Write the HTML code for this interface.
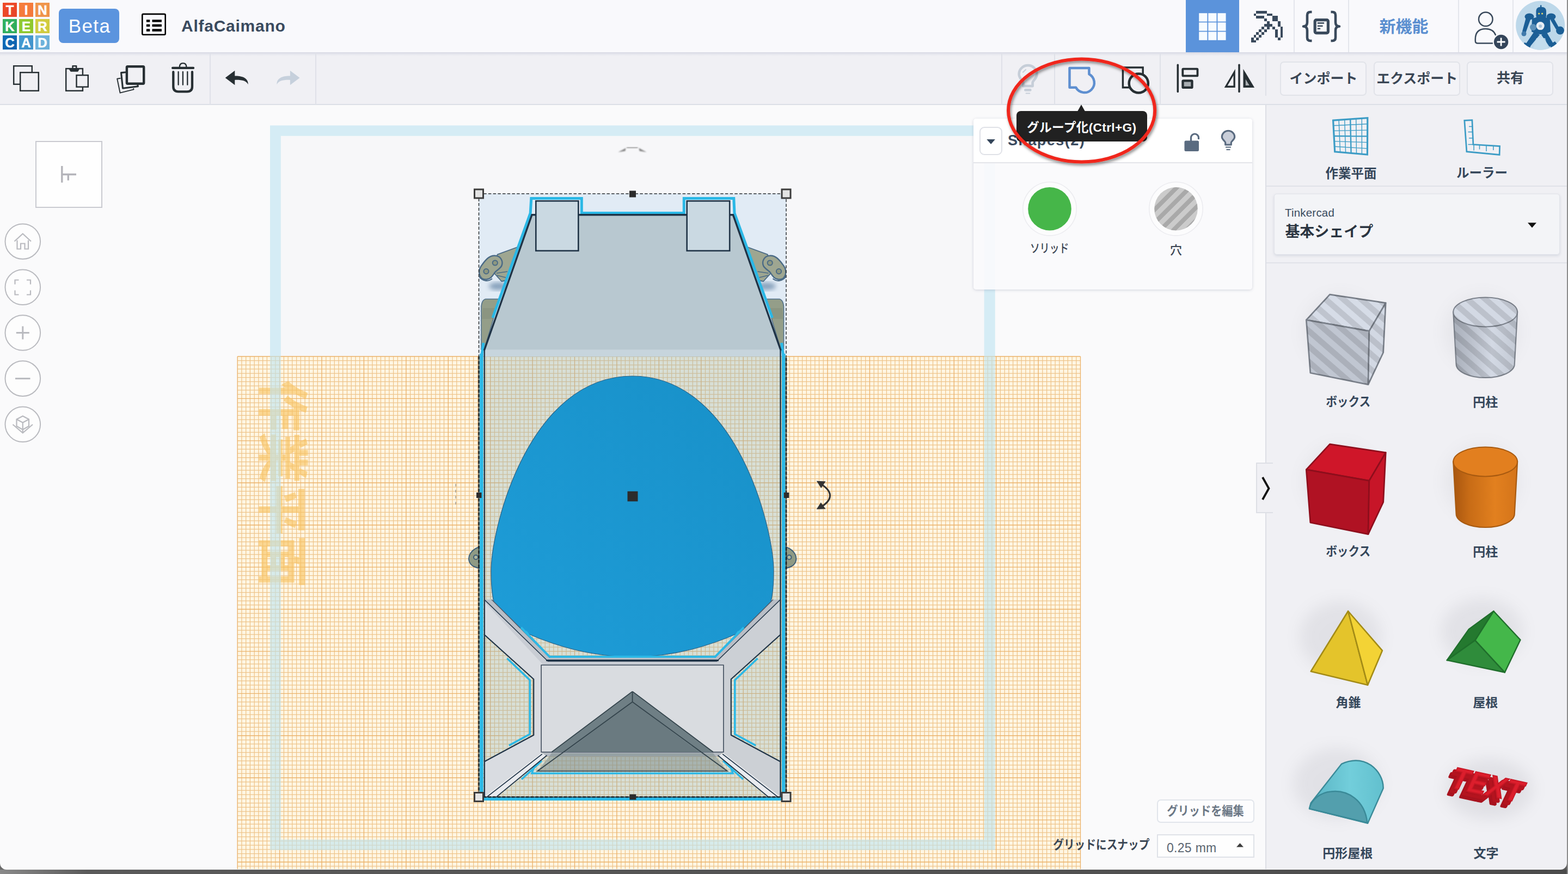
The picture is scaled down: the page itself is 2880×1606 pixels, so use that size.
<!DOCTYPE html><html><head><meta charset="utf-8"><title>Tinkercad</title><style>
*{box-sizing:border-box;margin:0;padding:0}
html,body{width:2880px;height:1606px;overflow:hidden;background:#fafafb;font-family:"Liberation Sans",sans-serif;color:#3a4a5c}
.abs{position:absolute}
#hdr{position:absolute;left:0;top:0;width:2880px;height:96px;background:#f9f9fc}
#hdrsh{position:absolute;left:0;top:96px;width:2880px;height:7px;background:linear-gradient(#d6d8e3,#e6e7ee 50%,#f0f0f4)}
#tb{position:absolute;left:0;top:96px;width:2880px;height:97px;background:#f0f0f4;border-bottom:2px solid #dcdfe6}
#rp{position:absolute;left:2324px;top:193px;width:556px;height:1404px;background:#f0f0f4;border-left:2px solid #dddfe5}
#bot{position:absolute;left:0;top:1597.500px;width:2880px;height:9px;background:linear-gradient(90deg,#8a8a8a 0,#5a5a5a 160px,#4c4c4c 100%)}
#rstrip{position:absolute;left:2878px;top:0;width:2px;height:1606px;background:#8c8c8c}
.vsep{position:absolute;width:2px;background:#dfe2e8}
.btn{position:absolute;border:2px solid #e1e3e9;border-radius:7px;background:#f3f3f7}
.lbl{overflow:visible}
.lbl text{font-family:"Liberation Sans","Noto Sans CJK JP",sans-serif;font-size:1000px;font-weight:bold}
</style></head><body>
<svg class="abs" style="left:0;top:193px" width="2326" height="1404" viewBox="0 193 2326 1404">
<defs><linearGradient id="egg" x1="0" y1="1" x2="1" y2="0"><stop offset="0" stop-color="#1e9dd8"/><stop offset="1" stop-color="#1890c8"/></linearGradient><filter id="bl2" x="-20%" y="-20%" width="140%" height="140%"><feGaussianBlur stdDeviation="4"/></filter><filter id="bl1"><feGaussianBlur stdDeviation="0.8"/></filter><clipPath id="body"><rect x="889.6" y="655" width="543.9" height="809.5"/></clipPath></defs>
<rect x="515.8" y="249.8" width="1292" height="1293" fill="#f7f7f9"/>
<rect x="436.2" y="655.0" width="1548.3" height="942.0" fill="#fff6e3"/>
<path d="M443.9 655.0V1597.0M451.7 655.0V1597.0M459.4 655.0V1597.0M467.2 655.0V1597.0M474.9 655.0V1597.0M482.6 655.0V1597.0M490.4 655.0V1597.0M498.1 655.0V1597.0M505.9 655.0V1597.0M521.4 655.0V1597.0M529.1 655.0V1597.0M536.8 655.0V1597.0M544.6 655.0V1597.0M552.3 655.0V1597.0M560.1 655.0V1597.0M567.8 655.0V1597.0M575.5 655.0V1597.0M583.3 655.0V1597.0M598.8 655.0V1597.0M606.5 655.0V1597.0M614.3 655.0V1597.0M622.0 655.0V1597.0M629.7 655.0V1597.0M637.5 655.0V1597.0M645.2 655.0V1597.0M653.0 655.0V1597.0M660.7 655.0V1597.0M676.2 655.0V1597.0M683.9 655.0V1597.0M691.7 655.0V1597.0M699.4 655.0V1597.0M707.2 655.0V1597.0M714.9 655.0V1597.0M722.6 655.0V1597.0M730.4 655.0V1597.0M738.1 655.0V1597.0M753.6 655.0V1597.0M761.3 655.0V1597.0M769.1 655.0V1597.0M776.8 655.0V1597.0M784.6 655.0V1597.0M792.3 655.0V1597.0M800.1 655.0V1597.0M807.8 655.0V1597.0M815.5 655.0V1597.0M831.0 655.0V1597.0M838.8 655.0V1597.0M846.5 655.0V1597.0M854.2 655.0V1597.0M862.0 655.0V1597.0M869.7 655.0V1597.0M877.5 655.0V1597.0M885.2 655.0V1597.0M892.9 655.0V1597.0M908.4 655.0V1597.0M916.2 655.0V1597.0M923.9 655.0V1597.0M931.7 655.0V1597.0M939.4 655.0V1597.0M947.1 655.0V1597.0M954.9 655.0V1597.0M962.6 655.0V1597.0M970.4 655.0V1597.0M985.8 655.0V1597.0M993.6 655.0V1597.0M1001.3 655.0V1597.0M1009.1 655.0V1597.0M1016.8 655.0V1597.0M1024.6 655.0V1597.0M1032.3 655.0V1597.0M1040.0 655.0V1597.0M1047.8 655.0V1597.0M1063.3 655.0V1597.0M1071.0 655.0V1597.0M1078.7 655.0V1597.0M1086.5 655.0V1597.0M1094.2 655.0V1597.0M1102.0 655.0V1597.0M1109.7 655.0V1597.0M1117.5 655.0V1597.0M1125.2 655.0V1597.0M1140.7 655.0V1597.0M1148.4 655.0V1597.0M1156.2 655.0V1597.0M1163.9 655.0V1597.0M1171.6 655.0V1597.0M1179.4 655.0V1597.0M1187.1 655.0V1597.0M1194.9 655.0V1597.0M1202.6 655.0V1597.0M1218.1 655.0V1597.0M1225.8 655.0V1597.0M1233.6 655.0V1597.0M1241.3 655.0V1597.0M1249.1 655.0V1597.0M1256.8 655.0V1597.0M1264.5 655.0V1597.0M1272.3 655.0V1597.0M1280.0 655.0V1597.0M1295.5 655.0V1597.0M1303.2 655.0V1597.0M1311.0 655.0V1597.0M1318.7 655.0V1597.0M1326.5 655.0V1597.0M1334.2 655.0V1597.0M1342.0 655.0V1597.0M1349.7 655.0V1597.0M1357.4 655.0V1597.0M1372.9 655.0V1597.0M1380.7 655.0V1597.0M1388.4 655.0V1597.0M1396.1 655.0V1597.0M1403.9 655.0V1597.0M1411.6 655.0V1597.0M1419.4 655.0V1597.0M1427.1 655.0V1597.0M1434.9 655.0V1597.0M1450.3 655.0V1597.0M1458.1 655.0V1597.0M1465.8 655.0V1597.0M1473.6 655.0V1597.0M1481.3 655.0V1597.0M1489.0 655.0V1597.0M1496.8 655.0V1597.0M1504.5 655.0V1597.0M1512.3 655.0V1597.0M1527.8 655.0V1597.0M1535.5 655.0V1597.0M1543.2 655.0V1597.0M1551.0 655.0V1597.0M1558.7 655.0V1597.0M1566.5 655.0V1597.0M1574.2 655.0V1597.0M1581.9 655.0V1597.0M1589.7 655.0V1597.0M1605.2 655.0V1597.0M1612.9 655.0V1597.0M1620.6 655.0V1597.0M1628.4 655.0V1597.0M1636.1 655.0V1597.0M1643.9 655.0V1597.0M1651.6 655.0V1597.0M1659.4 655.0V1597.0M1667.1 655.0V1597.0M1682.6 655.0V1597.0M1690.3 655.0V1597.0M1698.1 655.0V1597.0M1705.8 655.0V1597.0M1713.5 655.0V1597.0M1721.3 655.0V1597.0M1729.0 655.0V1597.0M1736.8 655.0V1597.0M1744.5 655.0V1597.0M1760.0 655.0V1597.0M1767.7 655.0V1597.0M1775.5 655.0V1597.0M1783.2 655.0V1597.0M1791.0 655.0V1597.0M1798.7 655.0V1597.0M1806.4 655.0V1597.0M1814.2 655.0V1597.0M1821.9 655.0V1597.0M1837.4 655.0V1597.0M1845.2 655.0V1597.0M1852.9 655.0V1597.0M1860.6 655.0V1597.0M1868.4 655.0V1597.0M1876.1 655.0V1597.0M1883.9 655.0V1597.0M1891.6 655.0V1597.0M1899.3 655.0V1597.0M1914.8 655.0V1597.0M1922.6 655.0V1597.0M1930.3 655.0V1597.0M1938.1 655.0V1597.0M1945.8 655.0V1597.0M1953.5 655.0V1597.0M1961.3 655.0V1597.0M1969.0 655.0V1597.0M1976.8 655.0V1597.0M436.2 662.7H1984.5M436.2 670.5H1984.5M436.2 678.2H1984.5M436.2 686.0H1984.5M436.2 693.7H1984.5M436.2 701.4H1984.5M436.2 709.2H1984.5M436.2 716.9H1984.5M436.2 724.7H1984.5M436.2 740.2H1984.5M436.2 747.9H1984.5M436.2 755.6H1984.5M436.2 763.4H1984.5M436.2 771.1H1984.5M436.2 778.9H1984.5M436.2 786.6H1984.5M436.2 794.3H1984.5M436.2 802.1H1984.5M436.2 817.6H1984.5M436.2 825.3H1984.5M436.2 833.1H1984.5M436.2 840.8H1984.5M436.2 848.5H1984.5M436.2 856.3H1984.5M436.2 864.0H1984.5M436.2 871.8H1984.5M436.2 879.5H1984.5M436.2 895.0H1984.5M436.2 902.7H1984.5M436.2 910.5H1984.5M436.2 918.2H1984.5M436.2 926.0H1984.5M436.2 933.7H1984.5M436.2 941.4H1984.5M436.2 949.2H1984.5M436.2 956.9H1984.5M436.2 972.4H1984.5M436.2 980.1H1984.5M436.2 987.9H1984.5M436.2 995.6H1984.5M436.2 1003.4H1984.5M436.2 1011.1H1984.5M436.2 1018.9H1984.5M436.2 1026.6H1984.5M436.2 1034.3H1984.5M436.2 1049.8H1984.5M436.2 1057.6H1984.5M436.2 1065.3H1984.5M436.2 1073.0H1984.5M436.2 1080.8H1984.5M436.2 1088.5H1984.5M436.2 1096.3H1984.5M436.2 1104.0H1984.5M436.2 1111.7H1984.5M436.2 1127.2H1984.5M436.2 1135.0H1984.5M436.2 1142.7H1984.5M436.2 1150.5H1984.5M436.2 1158.2H1984.5M436.2 1165.9H1984.5M436.2 1173.7H1984.5M436.2 1181.4H1984.5M436.2 1189.2H1984.5M436.2 1204.6H1984.5M436.2 1212.4H1984.5M436.2 1220.1H1984.5M436.2 1227.9H1984.5M436.2 1235.6H1984.5M436.2 1243.4H1984.5M436.2 1251.1H1984.5M436.2 1258.8H1984.5M436.2 1266.6H1984.5M436.2 1282.1H1984.5M436.2 1289.8H1984.5M436.2 1297.5H1984.5M436.2 1305.3H1984.5M436.2 1313.0H1984.5M436.2 1320.8H1984.5M436.2 1328.5H1984.5M436.2 1336.3H1984.5M436.2 1344.0H1984.5M436.2 1359.5H1984.5M436.2 1367.2H1984.5M436.2 1375.0H1984.5M436.2 1382.7H1984.5M436.2 1390.4H1984.5M436.2 1398.2H1984.5M436.2 1405.9H1984.5M436.2 1413.7H1984.5M436.2 1421.4H1984.5M436.2 1436.9H1984.5M436.2 1444.6H1984.5M436.2 1452.4H1984.5M436.2 1460.1H1984.5M436.2 1467.9H1984.5M436.2 1475.6H1984.5M436.2 1483.3H1984.5M436.2 1491.1H1984.5M436.2 1498.8H1984.5M436.2 1514.3H1984.5M436.2 1522.0H1984.5M436.2 1529.8H1984.5M436.2 1537.5H1984.5M436.2 1545.3H1984.5M436.2 1553.0H1984.5M436.2 1560.8H1984.5M436.2 1568.5H1984.5M436.2 1576.2H1984.5M436.2 1591.7H1984.5" stroke="#eec48a" stroke-width="1.25" fill="none"/>
<path d="M436.2 655.0V1597.0M513.6 655.0V1597.0M591.0 655.0V1597.0M668.4 655.0V1597.0M745.9 655.0V1597.0M823.3 655.0V1597.0M900.7 655.0V1597.0M978.1 655.0V1597.0M1055.5 655.0V1597.0M1132.9 655.0V1597.0M1210.3 655.0V1597.0M1287.8 655.0V1597.0M1365.2 655.0V1597.0M1442.6 655.0V1597.0M1520.0 655.0V1597.0M1597.4 655.0V1597.0M1674.8 655.0V1597.0M1752.3 655.0V1597.0M1829.7 655.0V1597.0M1907.1 655.0V1597.0M1984.5 655.0V1597.0M436.2 655.0H1984.5M436.2 732.4H1984.5M436.2 809.8H1984.5M436.2 887.2H1984.5M436.2 964.7H1984.5M436.2 1042.1H1984.5M436.2 1119.5H1984.5M436.2 1196.9H1984.5M436.2 1274.3H1984.5M436.2 1351.7H1984.5M436.2 1429.2H1984.5M436.2 1506.6H1984.5M436.2 1584.0H1984.5" stroke="#ebb26a" stroke-width="1.35" fill="none"/>
<text transform="translate(483.5 697.9) rotate(90)" x="0" y="0" font-family="'Liberation Sans','Noto Sans CJK JP',sans-serif" font-size="95.4" font-weight="bold" fill="#f9c25c" opacity="0.6">作業平面</text>
<path fill-rule="evenodd" fill="rgba(190,227,240,0.62)" d="M496 230.600H1827.700V1562H496Z M515.800 249.800V1542.700H1807.700V249.800Z"/>
<rect x="879.500" y="356" width="564.500" height="299" fill="rgba(175,210,236,0.30)"/>
<g filter="url(#bl2)" fill="#5f80a2" opacity="0.7"><ellipse cx="915" cy="526" rx="17" ry="7"/><ellipse cx="1408" cy="526" rx="17" ry="7"/></g>
<g stroke="#4a6a86" stroke-width="1.800" fill="#9ea691" stroke-linejoin="round">
<path d="M913.600 467.600 L952 453.500 L931 515 L921.300 517 L906 500z"/>
<path d="M885.500 486.500 C893 476 899 470 908 469.800 C920 469.500 924.500 480 921.500 488 C919.500 493.500 912 496.500 909 500.500 C905 506 902 512.500 893.500 513.500 C880 514.500 876 498 885.500 486.500z" stroke-width="2.400"/>
<path d="M880 508 C886 517 897 518 904 512" fill="none" stroke-width="2.200"/>
<circle cx="909.300" cy="483" r="4.600" fill="#8d977f" stroke-width="2"/><circle cx="893" cy="498.600" r="4.600" fill="#8d977f" stroke-width="2"/>
<path d="M912 502 L932 499 M913 506 L929 510" fill="none" stroke-width="1.500"/>
</g>
<path d="M891.400 549.600 H917 L889.500 642 H884 V566 Q884 552 891.400 549.600z" fill="#949e89" stroke="#50708a" stroke-width="1.500"/>
<path d="M887 566 H911 L905 586 H885z" fill="#868f7b" opacity="0.600"/>
<g transform="translate(2323.500 0) scale(-1 1)"><g stroke="#4a6a86" stroke-width="1.800" fill="#9ea691" stroke-linejoin="round">
<path d="M913.600 467.600 L952 453.500 L931 515 L921.300 517 L906 500z"/>
<path d="M885.500 486.500 C893 476 899 470 908 469.800 C920 469.500 924.500 480 921.500 488 C919.500 493.500 912 496.500 909 500.500 C905 506 902 512.500 893.500 513.500 C880 514.500 876 498 885.500 486.500z" stroke-width="2.400"/>
<path d="M880 508 C886 517 897 518 904 512" fill="none" stroke-width="2.200"/>
<circle cx="909.300" cy="483" r="4.600" fill="#8d977f" stroke-width="2"/><circle cx="893" cy="498.600" r="4.600" fill="#8d977f" stroke-width="2"/>
<path d="M912 502 L932 499 M913 506 L929 510" fill="none" stroke-width="1.500"/>
</g>
<path d="M891.400 549.600 H917 L889.500 642 H884 V566 Q884 552 891.400 549.600z" fill="#949e89" stroke="#50708a" stroke-width="1.500"/>
<path d="M887 566 H911 L905 586 H885z" fill="#868f7b" opacity="0.600"/></g>
<path d="M889.800 643 L977.300 393.800 H1346 L1433.500 643z" fill="#b8c8d0"/>
<rect x="889.800" y="642.500" width="543.700" height="13" fill="#c7d5dd"/>
<path d="M905 584 L974.200 391.500 L975.800 364.500 H1068.300 V391.500 H1256.300 V364.500 H1347.800 L1349 391.500 L1418.500 584 M888 630 L884.500 655 M1435.500 630 L1439 655" fill="none" stroke="#2bb8e6" stroke-width="5" stroke-linejoin="miter"/>
<path d="M889.300 644 L977.000 394.800 H1346.400 L1434.200 644" fill="none" stroke="#1f3346" stroke-width="3.400"/>
<g fill="#cad9e2" stroke="#1f3346" stroke-width="2.600"><rect x="984.300" y="369.300" width="78" height="91.500"/><rect x="1261.700" y="369.300" width="78.500" height="91.500"/></g>
<rect x="889.600" y="655" width="543.900" height="809.500" fill="rgba(140,178,190,0.340)"/>
<path d="M1161.5 691 C1351.5 691 1421 970 1421 1050 C1421 1120 1408 1150 1359 1162 C1308 1185 1238 1207 1161.5 1207 C1085 1207 1015 1185 964 1162 C915 1150 902 1120 902 1050 C902 970 971.5 691 1161.5 691Z" fill="url(#egg)" stroke="#2a6388" stroke-width="1.200"/>
<g fill="#8f9a84" stroke="#3f5f78" stroke-width="2"><path d="M883 1004 C868 1008 858 1020 862 1032 C865 1040 874 1044 883 1044z"/><path d="M1440.500 1004 C1455.500 1008 1465.500 1020 1461.500 1032 C1458.500 1040 1449.500 1044 1440.500 1044z"/><circle cx="874" cy="1024" r="4" fill="#b0b8a0"/><circle cx="1449.500" cy="1024" r="4" fill="#b0b8a0"/></g>
<path d="M931.400 1209.700 L973.200 1249.800 V1349 L934.900 1369.900 M966 1160 L1006 1212.500 H1317 L1357 1160 M1391.6 1209.700 L1349.8 1249.800 V1349 L1388.1 1369.900 M983 1402 L977 1421 H1346 L1340 1402 M958 1432 L995 1398 M1365.0 1432 L1328.0 1398" fill="none" stroke="#2bb8e6" stroke-width="3.600"/><path d="M889.6 1101.8 L1006.3 1215.0 L1316.7 1215.0 L1433.4 1101.8 L1433.4 1166.2 L1342.8 1248.0 L1342.8 1350.7 L1433.4 1399.5 L1433.4 1463.9 L1328.9 1384.0 L994.1 1384.0 L889.6 1463.9 L889.6 1399.5 L980.2 1350.7 L980.2 1248.0 L889.6 1166.2Z" fill="#d9dce1"/><path d="M889.6 1101.800 L903 1101.800 L1010 1208.500 H1313.0 L1420.0 1101.800 L1433.4 1101.800 L1316.7 1222 H1006.300Z" fill="#b9bec6"/><path d="M889.6 1101.800 L889.6 1106 L998 1222 H1325.0 L1433.4 1106 V1101.800 L1316.7 1215 H1006.300Z" fill="#c9cdd4"/><path d="M1433.4 1101.800 L1316.7 1215 L1328.9 1222 V1384 L1433.4 1463.900 V1399.500 L1342.8 1350.700 V1248 L1433.4 1166.200z" fill="#ccd0d5"/><rect x="994.100" y="1222" width="334.800" height="160" fill="#d9dce0"/><path d="M889.6 1463.900 H912.300 L1004.500 1388 L994.100 1384z M1433.4 1463.900 H1410.700 L1318.500 1388 L1328.900 1384z" fill="#e9ebef"/><path d="M994.100 1382 H1328.900 L1319.000 1390 H1004z" fill="#b4bac1"/><g fill="none" stroke="#1f3346" stroke-width="2.200" stroke-linejoin="round"><path d="M889.6 1166.200 L980.200 1248 V1350.700 L889.6 1399.500"/><path d="M1433.4 1166.200 L1342.8 1248 V1350.700 L1433.4 1399.500"/><path d="M889.6 1101.800 L1006.300 1215 H1316.7 L1433.4 1101.800" stroke-width="1.600"/><path d="M1003 1213.500 H1320.0" stroke-width="3.200"/><path d="M903 1101.800 L1010 1208.500 M1420.0 1101.800 L1313.0 1208.500" stroke-width="1.300" stroke="#4a5564"/><path d="M994.100 1222 V1382 H1328.900 V1222z" stroke-width="1.600" stroke="#3d4a5a"/><path d="M894.900 1463.900 L995.800 1385.600 M912.300 1463.900 L1004.500 1388 M1428.1 1463.900 L1327.2 1385.600 M1410.700 1463.900 L1318.500 1388" stroke-width="1.800"/></g>
<path d="M957 1153 L1009.500 1206.800 H1313.500 L1366 1153" fill="none" stroke="#2bb8e6" stroke-width="4"/>
<path d="M1161.600 1270.600 L1013.200 1382 H1310z" fill="#6f7f85"/>
<path d="M1161.600 1289.800 L1040 1382 H1283z" fill="#6a7a80"/>
<path d="M1013.200 1384 L987.100 1416.900 H1336 L1310 1384z" fill="rgba(120,135,135,0.500)"/>
<path d="M1161.600 1270.600 V1289.800 M1161.600 1289.800 L987.100 1416.900 H1336 L1161.600 1289.800 M1161.600 1270.600 L1013.200 1382 M1161.600 1270.600 L1310 1382" fill="none" stroke="#34444c" stroke-width="1.800"/>
<path d="M884.400 650 V1467.800 H1439.200 V650" fill="none" stroke="#2bb8e6" stroke-width="6.600"/>
<path d="M889.800 644 V1464 M1433.500 644 V1464" fill="none" stroke="#1f3346" stroke-width="2.400"/>
<rect x="879.500" y="356" width="564.500" height="1108.500" fill="none" stroke="#2a2f33" stroke-width="1.500" stroke-dasharray="5.500 3.200"/>
<path d="M879.500 655 V1464.500 H1444 V655" fill="none" stroke="#1c2226" stroke-width="2.600" stroke-dasharray="5.500 3.200"/>
<rect x="871.5" y="348.0" width="16" height="16" fill="#e3e3e3" stroke="#3c3c3c" stroke-width="3"/>
<rect x="1436.0" y="348.0" width="16" height="16" fill="#e3e3e3" stroke="#3c3c3c" stroke-width="3"/>
<rect x="871.5" y="1456.5" width="16" height="16" fill="#e3e3e3" stroke="#3c3c3c" stroke-width="3"/>
<rect x="1436.0" y="1456.5" width="16" height="16" fill="#e3e3e3" stroke="#3c3c3c" stroke-width="3"/>
<rect x="1156.0" y="350.5" width="12" height="12" fill="#2c2c2c"/>
<rect x="1156.3" y="1459.5" width="12" height="10" fill="#2c2c2c"/>
<rect x="875.0" y="905.0" width="9.5" height="10" fill="#2c2c2c"/>
<rect x="1439.8" y="905.0" width="9.500" height="10" fill="#2c2c2c"/>
<rect x="1152.5" y="902.8" width="19" height="18.5" fill="#2c2c2c"/>
<path d="M1505.700 888 Q1543 910.700 1506.400 932.500" fill="none" stroke="#333" stroke-width="3.200"/><path d="M1499.700 883.700 L1516.500 884.400 L1508.200 897z M1499.700 935.700 L1516.500 935.300 L1507.700 923.200z" fill="#333"/>
<g filter="url(#bl1)" opacity="0.800"><path d="M1151 271 H1171.500" fill="none" stroke="#777" stroke-width="2"/><path d="M1135.500 279.500 L1149.500 272 L1148.500 277.500z M1187.500 279.500 L1173.500 272 L1174.500 277.500z" fill="#6a6a6a"/></g>
<path d="M837 889 V931" stroke="#777" stroke-width="1.500" stroke-dasharray="5 6" fill="none" opacity="0.700"/>
</svg>
<div class="abs" style="left:64.500px;top:258.500px;width:123px;height:123px;background:#fefefe;border:2px solid #c9cad0"></div>
<svg class="abs" style="left:100px;top:295px;filter:blur(0.7px)" width="50" height="50" viewBox="100 295 50 50"><path d="M113.800 305 V335.600 M113.800 320.500 H140 M125.300 320.500 V331.500" stroke="#b4b4ba" stroke-width="3.400" fill="none"/></svg>
<svg class="abs" style="left:0;top:400px" width="90" height="430" viewBox="0 400 90 430"><g fill="#fdfdfd" stroke="#b9babf" stroke-width="2"><circle cx="41.800" cy="443.7" r="32.300"/><circle cx="41.800" cy="527.8" r="32.300"/><circle cx="41.800" cy="611.5" r="32.300"/><circle cx="41.800" cy="695.6" r="32.300"/><circle cx="41.800" cy="779.8" r="32.300"/></g><g fill="none" stroke="#b9babf" stroke-width="2.200"><path d="M26.500 443.500 L41.800 429.500 L57 443.500 M31.500 441.500 V457.500 H38 V447.500 H45.500 V457.500 H52 V441.500"/><path d="M27.500 522.500 V514.500 H34.500 M49 514.500 H56 V522.500 M56 533.500 V541.500 H49 M34.500 541.500 H27.500 V533.500"/><path d="M41.800 599.500 V623.500 M29.800 611.500 H53.800" stroke-width="3"/><path d="M28 695.600 H55.500" stroke-width="3"/><path d="M41.800 764.500 L53 770.500 V783 L41.800 789.500 L30.500 783 V770.500z M30.500 770.500 L41.800 776.500 L53 770.500 M41.800 776.500 V795.500 M23.500 780 L41.800 795.500 L60 780"/></g></svg>
<div class="abs" style="left:2124.500px;top:1468.500px;width:179px;height:43px;border:2px solid #e1e5eb;border-radius:7px;background:#fdfdfe"></div>
<div class="abs" style="left:2124.500px;top:1532.500px;width:179px;height:43px;border:2px solid #dfe2e8;background:#fefefe"></div>
<div class="abs" style="left:2143px;top:1543px;font-size:23px;line-height:30px;color:#5a6470;letter-spacing:0.3px">0.25 mm</div>
<svg class="abs" style="left:2270px;top:1548px" width="15" height="10" viewBox="0 0 15 10"><path d="M1 8.500 L7.500 1.200 L14 8.500z" fill="#3c3c3c"/></svg>
<div id="hdr"></div>
<div id="tb"></div><div id="hdrsh"></div>
<div class="abs" style="left:5px;top:5px;width:26px;height:26px;background:linear-gradient(135deg,#f04a28,#e6452a);color:#fff;font-weight:bold;font-size:24px;line-height:28.5px;-webkit-text-stroke:0.5px #fff;text-align:center">T</div>
<div class="abs" style="left:35px;top:5px;width:26px;height:26px;background:linear-gradient(135deg,#f67e3c,#f4773a);color:#fff;font-weight:bold;font-size:24px;line-height:28.5px;-webkit-text-stroke:0.5px #fff;text-align:center">I</div>
<div class="abs" style="left:65px;top:5px;width:26px;height:26px;background:linear-gradient(135deg,#f0984e,#ef9148);color:#fff;font-weight:bold;font-size:24px;line-height:28.5px;-webkit-text-stroke:0.5px #fff;text-align:center">N</div>
<div class="abs" style="left:5px;top:35px;width:26px;height:26px;background:linear-gradient(135deg,#33b262,#2eab5a);color:#fff;font-weight:bold;font-size:24px;line-height:28.5px;-webkit-text-stroke:0.5px #fff;text-align:center">K</div>
<div class="abs" style="left:35px;top:35px;width:26px;height:26px;background:linear-gradient(135deg,#92cc30,#8cc62c);color:#fff;font-weight:bold;font-size:24px;line-height:28.5px;-webkit-text-stroke:0.5px #fff;text-align:center">E</div>
<div class="abs" style="left:65px;top:35px;width:26px;height:26px;background:linear-gradient(135deg,#d3ce42,#cfca3e);color:#fff;font-weight:bold;font-size:24px;line-height:28.5px;-webkit-text-stroke:0.5px #fff;text-align:center">R</div>
<div class="abs" style="left:5px;top:65px;width:26px;height:26px;background:linear-gradient(135deg,#126cb8,#0e62ae);color:#fff;font-weight:bold;font-size:24px;line-height:28.5px;-webkit-text-stroke:0.5px #fff;text-align:center">C</div>
<div class="abs" style="left:35px;top:65px;width:26px;height:26px;background:linear-gradient(135deg,#459ad2,#3f93cb);color:#fff;font-weight:bold;font-size:24px;line-height:28.5px;-webkit-text-stroke:0.5px #fff;text-align:center">A</div>
<div class="abs" style="left:65px;top:65px;width:26px;height:26px;background:linear-gradient(135deg,#72b6de,#6aaed8);color:#fff;font-weight:bold;font-size:24px;line-height:28.5px;-webkit-text-stroke:0.5px #fff;text-align:center">D</div>
<div class="abs" style="left:108px;top:16px;width:111px;height:63px;border-radius:8px;background:#5b94de;color:#fff;font-size:35px;line-height:64px;text-align:center;letter-spacing:1.4px;padding-left:2px">Beta</div>
<svg class="abs" style="left:258px;top:22px" width="50" height="46" viewBox="258 22 50 46">
<rect x="261.3" y="25.9" width="42.4" height="37.8" rx="2" fill="none" stroke="#000" stroke-width="2.6"/>
<g fill="#000"><rect x="268.9" y="36.2" width="6.4" height="4.4"/><rect x="279.5" y="36.2" width="17.4" height="4.4"/>
<rect x="268.9" y="44.6" width="6.4" height="4.4"/><rect x="279.5" y="44.6" width="17.4" height="4.4"/>
<rect x="268.9" y="53.2" width="6.4" height="4.6"/><rect x="279.5" y="53.2" width="17.4" height="4.6"/></g></svg>
<div class="abs" id="ttl" style="left:333px;top:27.500px;font-size:30px;font-weight:bold;line-height:40px;color:#3a4a5e;white-space:nowrap;letter-spacing:0.750px">AlfaCaimano</div>
<div class="abs" style="left:2178px;top:0;width:98px;height:96px;background:#5b93db"></div>
<svg class="abs" style="left:2200px;top:22px" width="56" height="56" viewBox="2200 22 56 56"><g fill="#f6fbff"><rect x="2202.2" y="24.2" width="15.2" height="15.4"/><rect x="2219.3" y="24.2" width="15.2" height="15.4"/><rect x="2236.4" y="24.2" width="15.2" height="15.4"/><rect x="2202.2" y="41.3" width="15.2" height="15.4"/><rect x="2219.3" y="41.3" width="15.2" height="15.4"/><rect x="2236.4" y="41.3" width="15.2" height="15.4"/><rect x="2202.2" y="58.4" width="15.2" height="15.4"/><rect x="2219.3" y="58.4" width="15.2" height="15.4"/><rect x="2236.4" y="58.4" width="15.2" height="15.4"/></g></svg>
<svg class="abs" style="left:2296px;top:18px" width="64" height="64" viewBox="2296 18 64 64" shape-rendering="crispEdges"><g fill="#3a4a5c"><rect x="2307.4" y="19.6" width="4.9" height="4.9"/><rect x="2312.3" y="19.6" width="4.9" height="4.9"/><rect x="2317.2" y="19.6" width="4.9" height="4.9"/><rect x="2322.1" y="19.6" width="4.9" height="4.9"/><rect x="2302.5" y="24.5" width="4.9" height="4.9"/><rect x="2327.0" y="24.5" width="4.9" height="4.9"/><rect x="2331.9" y="24.5" width="4.9" height="4.9"/><rect x="2307.4" y="29.4" width="4.9" height="4.9"/><rect x="2312.3" y="29.4" width="4.9" height="4.9"/><rect x="2317.2" y="29.4" width="4.9" height="4.9"/><rect x="2336.8" y="29.4" width="4.9" height="4.9"/><rect x="2341.7" y="29.4" width="4.9" height="4.9"/><rect x="2322.1" y="34.3" width="4.9" height="4.9"/><rect x="2336.8" y="34.3" width="4.9" height="4.9"/><rect x="2341.7" y="34.3" width="4.9" height="4.9"/><rect x="2327.0" y="39.2" width="4.9" height="4.9"/><rect x="2346.6" y="39.2" width="4.9" height="4.9"/><rect x="2322.1" y="44.1" width="4.9" height="4.9"/><rect x="2327.0" y="44.1" width="4.9" height="4.9"/><rect x="2331.9" y="44.1" width="4.9" height="4.9"/><rect x="2346.6" y="44.1" width="4.9" height="4.9"/><rect x="2317.2" y="49.0" width="4.9" height="4.9"/><rect x="2327.0" y="49.0" width="4.9" height="4.9"/><rect x="2336.8" y="49.0" width="4.9" height="4.9"/><rect x="2351.5" y="49.0" width="4.9" height="4.9"/><rect x="2312.3" y="53.9" width="4.9" height="4.9"/><rect x="2322.1" y="53.9" width="4.9" height="4.9"/><rect x="2341.7" y="53.9" width="4.9" height="4.9"/><rect x="2351.5" y="53.9" width="4.9" height="4.9"/><rect x="2307.4" y="58.8" width="4.9" height="4.9"/><rect x="2317.2" y="58.8" width="4.9" height="4.9"/><rect x="2341.7" y="58.8" width="4.9" height="4.9"/><rect x="2351.5" y="58.8" width="4.9" height="4.9"/><rect x="2302.5" y="63.7" width="4.9" height="4.9"/><rect x="2312.3" y="63.7" width="4.9" height="4.9"/><rect x="2341.7" y="63.7" width="4.9" height="4.9"/><rect x="2351.5" y="63.7" width="4.9" height="4.9"/><rect x="2297.6" y="68.6" width="4.9" height="4.9"/><rect x="2307.4" y="68.6" width="4.9" height="4.9"/><rect x="2346.6" y="68.6" width="4.9" height="4.9"/><rect x="2297.6" y="73.5" width="4.9" height="4.9"/><rect x="2302.5" y="73.5" width="4.9" height="4.9"/></g></svg>
<div class="vsep" style="left:2375.6px;top:0;height:96px;background:#e4e6ec"></div>
<div class="vsep" style="left:2475.6px;top:0;height:96px;background:#e4e6ec"></div>
<div class="vsep" style="left:2677.9px;top:0;height:96px;background:#e4e6ec"></div>
<div class="vsep" style="left:2777.6px;top:0;height:96px;background:#e4e6ec"></div>
<svg class="abs" style="left:2388px;top:14px" width="80" height="70" viewBox="2388 14 80 70">
<g fill="none" stroke="#3a4a5c" stroke-width="5" stroke-linejoin="round">
<path d="M2409.5 22 h-2.5 q-6 0 -6 6 v13 q0 7.5 -7 7.5 q7 0 7 7.500 v13 q0 6 6 6 h2.500" stroke-width="4.600"/>
<path d="M2444.5 22 h2.5 q6 0 6 6 v13 q0 7.5 7 7.5 q-7 0 -7 7.500 v13 q0 6 -6 6 h-2.500" stroke-width="4.600"/>
<rect x="2415.200" y="36.600" width="24.200" height="24" rx="2.500" stroke-width="5.200"/></g>
<g fill="#3a4a5c"><rect x="2419.800" y="41.100" width="12.300" height="2.600"/><rect x="2419.800" y="46.500" width="9.800" height="2.500"/><rect x="2419.800" y="51.400" width="5.300" height="2.500"/></g>
</svg>
<svg class="abs" style="left:2700px;top:16px" width="80" height="80" viewBox="2700 16 80 80">
<g fill="none" stroke="#3a4a5c" stroke-width="2.500" stroke-linecap="round">
<circle cx="2728.800" cy="35.300" r="12.800"/>
<path d="M2741 79.500 H2714 Q2709.800 79.500 2709.800 75 V72 Q2709.800 53 2728.800 53 Q2742.500 53 2746.800 64"/></g>
<circle cx="2757.100" cy="77" r="13.200" fill="#34455a"/>
<path d="M2757.100 69.500 V84.500 M2749.600 77 H2764.600" stroke="#fff" stroke-width="2.800" fill="none"/>
</svg>
<svg class="abs" style="left:2782px;top:0px" width="94" height="94" viewBox="2782 0 94 94">
<defs><clipPath id="avc"><circle cx="2829.200" cy="46.700" r="45"/></clipPath>
<filter id="avb"><feGaussianBlur stdDeviation="0.700"/></filter></defs>
<circle cx="2829.200" cy="46.700" r="45" fill="#bdd8ea"/>
<g clip-path="url(#avc)" filter="url(#avb)"><g fill="#1d5e96">
<rect x="2821.400" y="13" width="18.600" height="23" rx="7"/><rect x="2829" y="9.500" width="2.400" height="5"/>
<path d="M2814 34 Q2830 28 2846.700 34 L2848 58 Q2830 68 2813 58z"/>
<ellipse cx="2809" cy="30.500" rx="8.500" ry="6"/><ellipse cx="2849" cy="30.500" rx="8.500" ry="6"/>
<path d="M2803 32 L2796 58 L2802 61 L2811 36z M2853 32 L2863 50 L2858 54 L2848 37z"/>
<circle cx="2865.500" cy="56" r="7.500"/><circle cx="2799" cy="62" r="4.500" fill="#3f7aab"/>
<path d="M2818 58 L2803 80 L2810 86 L2828 64z M2840 58 L2853 80 L2846 86 L2831 64z"/>
<path d="M2800 78 L2812 82 L2808 94 L2794 90z M2856 76 L2846 82 L2852 94 L2866 88z"/>
<circle cx="2816" cy="50" r="6" fill="#5b90b9"/>
</g>
<circle cx="2826.700" cy="25" r="1.600" fill="#e6d96a"/><circle cx="2832.600" cy="25" r="1.600" fill="#e6d96a"/>
<circle cx="2829.200" cy="47.600" r="7.500" fill="#e9eff5"/><circle cx="2829.200" cy="48" r="3" fill="#a9c3da"/>
<path d="M2815 94 L2822 70 H2838 L2845 94z" fill="#c6deee" opacity="0.800"/>
</g>
</svg>
<svg class="abs" style="left:0;top:100px" width="2340" height="92" viewBox="0 100 2340 92">
<!-- copy -->
<g fill="#f0f0f4" stroke="#272f33" stroke-width="2.45">
<rect x="25.2" y="121.2" width="33.6" height="33.6"/><rect x="37.2" y="133.2" width="33.6" height="33.6"/>
<!-- paste -->
<rect x="121.2" y="126.1" width="30.7" height="40.7"/>
<rect x="140.5" y="138.2" width="21.3" height="21.500"/>
</g>
<path fill="#272f33" d="M133.300 120 h7.100 a1.000 1.000 0 0 1 1.000 1.000 v5.300 h5 l-3.300 5.400 h-13.300 l-3.800 -5.400 h6.300 v-5.300 a1.000 1.000 0 0 1 1 -1z M134.700 122.400 v4.600 h4.200 v-4.600z" fill-rule="evenodd"/>
<!-- duplicate -->
<g fill="none" stroke="#272f33" stroke-linejoin="round">
<path d="M221.5 143.800 L215.200 144.700 L220.600 170.700 L245.600 164.300 L245.000 162.300" stroke-width="1.900"/>
<path d="M231 132.700 L222.500 133.600 L225.500 162.200 L253.400 158.700 L252.800 156" stroke-width="3.100"/>
<rect x="232.900" y="122.200" width="31.300" height="31.600" rx="1.500" stroke-width="4.400" fill="#f0f0f4"/>
</g>
<!-- trash -->
<g fill="none" stroke="#272f33" stroke-linecap="round">
<path d="M317.100 124.900 H355.100" stroke-width="4.200"/>
<path d="M329.800 123.500 Q329.800 116.200 336.100 116.200 Q342.400 116.200 342.400 123.500" stroke-width="2.300"/>
<path d="M318.300 132.200 V159 Q318.300 168.300 327.500 168.300 H343.800 Q353 168.300 353 159 V132.200" stroke-width="4.300"/>
<path d="M327.600 132 V155.800 M335.900 132 V155.800 M344.300 132 V155.800" stroke-width="2.300"/>
</g>
<!-- undo -->
<path fill="#272f33" d="M413.700 142.900 L431.300 129.800 V139.400 C445 139 456.500 143.500 455.700 155.300 C452.500 148.500 445 146.600 431.300 146.900 V156.200Z"/>
<path fill="#c6d0dc" d="M550.500 142.900 L532.900 129.800 V139.400 C519.200 139 507.700 143.500 508.500 155.300 C511.700 148.500 519.200 146.600 532.900 146.900 V156.200Z"/>
<!-- bulb (disabled) -->
<g fill="none" stroke="#c6ced8" stroke-linecap="round" stroke-linejoin="round">
<path d="M1879.300 158.200 V152 C1879.300 148 1871.600 144.500 1871.600 136 A16.500 15.800 0 0 1 1904.600 136 C1904.600 144.500 1896.600 148 1896.600 152 V158.200Z" stroke-width="4.700"/>
<path d="M1878.900 132.700 L1884 127.900" stroke-width="2"/>
<path d="M1883.300 165.400 H1892.300" stroke-width="4.600"/>
<path d="M1884.500 171.500 H1891.300" stroke-width="1.900"/>
</g>
<!-- group (blue) -->
<path fill="none" stroke="#5e8fd0" stroke-width="4.500" stroke-linejoin="round" d="M2000.400 136.200 V125 H1964.500 V160.700 H1976.100 A18 18 0 1 0 2000.400 136.200Z"/>
<!-- ungroup -->
<g fill="none" stroke="#272f33">
<path d="M2075 160.800 H2062.400 V124 H2099.200 V138" stroke-width="3.400"/>
<circle cx="2091.300" cy="153" r="17.600" stroke-width="4.500"/>
</g>
<!-- align -->
<g stroke="#272f33" stroke-linecap="round" fill="none">
<path d="M2163.300 119.200 V168.400" stroke-width="3.500"/>
<rect x="2172.300" y="126.600" width="27.200" height="12.800" rx="1" stroke-width="3.800"/>
<rect x="2172.500" y="148.300" width="17" height="12.600" rx="1" stroke-width="4.300" fill="#a9aeb2"/>
<!-- mirror -->
<path d="M2276 119.200 V168.400" stroke-width="3.500"/>
</g><g>
<path d="M2268.800 126.700 V160.900 H2248.700z M2265.500 138.800 V157.600 H2254.500z" fill="#272f33" fill-rule="evenodd"/>
<path d="M2283.500 126.700 V160.900 H2304.100z" fill="#272f33"/><path d="M2287.800 145.500 V157 H2294.800z" fill="#a9aeb2"/>
</g>
</svg>
<div class="vsep" style="left:384.5px;top:97px;height:95px;background:#dfe1e8"></div>
<div class="vsep" style="left:578.5px;top:97px;height:95px;background:#dfe1e8"></div>
<div class="vsep" style="left:1838.5px;top:97px;height:95px;background:#dfe1e8"></div>
<div class="vsep" style="left:1936.2px;top:97px;height:95px;background:#dfe1e8"></div>
<div class="vsep" style="left:2130.3px;top:97px;height:95px;background:#dfe1e8"></div>
<div class="vsep" style="left:2324.200px;top:99px;height:77px;background:#dfe1e8"></div>
<div class="btn" style="left:2351px;top:112.500px;width:159px;height:63px"></div>
<div class="btn" style="left:2522.5px;top:112.500px;width:159px;height:63px"></div>
<div class="btn" style="left:2694px;top:112.500px;width:159px;height:63px"></div>
<div id="rp"></div>
<div class="abs" style="left:2326px;top:340.7px;width:2554px;height:2px;background:#e0e2e8"></div>
<div class="abs" style="left:2326px;top:481.7px;width:2554px;height:2px;background:#e0e2e8"></div>
<div class="abs" style="left:2339.500px;top:356px;width:525px;height:112px;background:#f3f4f7;border:1.500px solid #e2e4ea;border-radius:5px;box-shadow:0 2px 5px rgba(120,130,160,0.220)"></div>
<div class="abs" style="left:2360px;top:377px;font-size:20.500px;line-height:28px;color:#3a4a5e;letter-spacing:0.2px">Tinkercad</div>
<svg class="abs" style="left:2805px;top:408px" width="18" height="12" viewBox="0 0 18 12"><path d="M1 1.200 H17 L9 10.500z" fill="#111"/></svg>
<div class="abs" style="left:2306.500px;top:850px;width:31px;height:93px;background:#f0f0f4;border:2px solid #dddfe5;border-right:none"></div>
<svg class="abs" style="left:2312px;top:870px" width="24" height="56" viewBox="2312 870 24 56"><path d="M2319 877 L2330.500 897.500 L2319 918" fill="none" stroke="#111" stroke-width="3.800"/></svg>
<svg class="abs" style="left:2326px;top:196px" width="552" height="1401" viewBox="2326 196 552 1401">
<defs>
<pattern id="st" width="21.400" height="21.400" patternUnits="userSpaceOnUse" patternTransform="rotate(-49)"><rect width="10.700" height="21.400" fill="#000" opacity="0.110"/></pattern>
<filter id="sh" x="-50%" y="-50%" width="200%" height="200%"><feGaussianBlur stdDeviation="14"/></filter>
<linearGradient id="cylh" x1="0" x2="1"><stop offset="0" stop-color="#a9afba"/><stop offset="0.250" stop-color="#b9bfca"/><stop offset="0.600" stop-color="#d3d9e4"/><stop offset="1" stop-color="#c3c9d4"/></linearGradient>
<linearGradient id="cylo" x1="0" x2="1"><stop offset="0" stop-color="#a8560f"/><stop offset="0.250" stop-color="#c86c16"/><stop offset="0.650" stop-color="#e2801f"/><stop offset="1" stop-color="#d4741a"/></linearGradient>
<linearGradient id="rr" x1="0" x2="1"><stop offset="0" stop-color="#58b2c2"/><stop offset="0.550" stop-color="#72cedb"/><stop offset="1" stop-color="#62c0ce"/></linearGradient>
</defs>
<g fill="none" stroke="#3c9cc5"><path d="M2448.6 221.2 L2511.8 216.6 L2511.4 284.1 L2451.7 278.800Z" stroke-width="3.200"/><path d="M2459.1 220.4 L2461.6 279.7M2449.1 230.8 L2511.7 227.8M2469.7 219.7 L2471.6 280.6M2449.6 240.4 L2511.7 239.1M2490.7 218.1 L2491.5 282.3M2450.7 259.6 L2511.5 261.6M2501.3 217.4 L2501.4 283.2M2451.2 269.2 L2511.5 272.9" stroke-width="1.400"/><path d="M2480.2 218.9 L2481.6 281.5M2450.1 250.0 L2511.6 250.4" stroke-width="2.400"/></g>
<g fill="none" stroke="#3c9cc5"><path d="M2689.800 221.300 L2703.900 220.600 L2705.900 265.500 L2754.600 268.600 L2754.100 284.400 L2693.900 278.700Z" stroke-width="2.700"/><path d="M2698.100 232.500 H2705 M2696.500 242.600 H2705.300 M2698.100 253.800 H2705.600 M2696.500 265.600 H2706 M2707.100 266 V276.500 M2717.500 267 V274.500 M2730 268 V278 M2742.900 268.500 V276" stroke-width="1.500"/></g>
<ellipse cx="2462" cy="610" rx="70" ry="70" fill="#70707c" opacity="0.07" filter="url(#sh)"/>
<g stroke="#7a808a" stroke-width="2.700" stroke-linejoin="round"><path d="M2442.5 541.1 L2545.2 556.6 L2514.8 608.4 L2399.3 587.9Z" fill="#d6dce7"/><path d="M2399.3 587.9 L2514.8 608.4 L2513.0 706.6 L2406.8 685.2Z" fill="#c0c6d1"/><path d="M2514.8 608.4 L2545.2 556.6 L2540.7 647.7 L2513.0 706.6Z" fill="#d2d8e3"/></g><path d="M2442.5 541.1 L2545.2 556.6 L2540.7 647.7 L2513.0 706.6 L2406.8 685.2 L2399.3 587.9Z" fill="url(#st)"/>
<ellipse cx="2462" cy="885" rx="70" ry="70" fill="#70707c" opacity="0.07" filter="url(#sh)"/>
<g stroke="#8e0e1c" stroke-width="2.700" stroke-linejoin="round"><path d="M2442.5 816.1 L2545.2 831.6 L2514.8 883.4 L2399.3 862.9Z" fill="#cf1629"/><path d="M2399.3 862.9 L2514.8 883.4 L2513.0 981.6 L2406.8 960.2Z" fill="#b01223"/><path d="M2514.8 883.4 L2545.2 831.6 L2540.7 922.7 L2513.0 981.6Z" fill="#c71528"/></g>
<ellipse cx="2722" cy="610" rx="70" ry="70" fill="#70707c" opacity="0.07" filter="url(#sh)"/>
<path d="M2669.300 573.4 L2674.600 669.0 A53.600 25 0 0 0 2781.800 669.0 L2787.100 573.4Z" fill="url(#cylh)" stroke="#7d838d" stroke-width="2.200"/><ellipse cx="2728.200" cy="573.4" rx="58.900" ry="27" fill="#d3d9e4" stroke="#7d838d" stroke-width="2"/><path d="M2669.300 573.4 L2674.600 669.0 A53.600 25 0 0 0 2781.800 669.0 L2787.100 573.4 A58.900 27 0 0 0 2669.300 573.4Z" fill="url(#st)"/>
<ellipse cx="2722" cy="885" rx="70" ry="70" fill="#70707c" opacity="0.07" filter="url(#sh)"/>
<path d="M2669.300 848.4 L2674.600 944.0 A53.600 25 0 0 0 2781.800 944.0 L2787.100 848.4Z" fill="url(#cylo)" stroke="#a85a10" stroke-width="2.200"/><ellipse cx="2728.200" cy="848.4" rx="58.900" ry="27" fill="#e27f1f" stroke="#a85a10" stroke-width="2"/>
<ellipse cx="2462" cy="1170" rx="75" ry="65" fill="#70707c" opacity="0.11" filter="url(#sh)"/>
<g stroke="#a38b16" stroke-width="2.600" stroke-linejoin="round"><path d="M2476.100 1123 L2407.700 1233.800 L2512.100 1258.800Z" fill="#e4c42b"/><path d="M2476.100 1123 L2512.100 1258.800 L2538.900 1195.400Z" fill="#f3d335"/></g>
<ellipse cx="2722" cy="1160" rx="75" ry="60" fill="#70707c" opacity="0.11" filter="url(#sh)"/>
<g stroke="#1f6e2b" stroke-width="2.400" stroke-linejoin="round"><path d="M2743.400 1123 L2697.900 1156.100 L2657.700 1213.200 L2709.500 1176.600Z" fill="#24792f"/><path d="M2709.500 1176.600 L2763.900 1235.500 L2657.700 1213.200Z" fill="#2f8c3b"/><path d="M2743.400 1123 L2792.500 1175.700 L2763.900 1235.500 L2709.500 1176.600Z" fill="#44b74a"/></g>
<ellipse cx="2455" cy="1440" rx="80" ry="65" fill="#70707c" opacity="0.11" filter="url(#sh)"/>
<g stroke="#3a8a98" stroke-width="2.400" stroke-linejoin="round"><path d="M2405 1486 L2407.700 1475.400 L2463.900 1403.900 C2480 1396 2500 1394 2518 1406 C2532 1416 2541 1432 2540.700 1448.600 L2512.100 1512.900Z" fill="url(#rr)"/><path d="M2405 1486 C2408 1470 2425 1456 2445 1454.500 C2475 1451 2507 1470 2511.300 1512Z" fill="#539fad"/></g>
<ellipse cx="2735" cy="1450" rx="80" ry="55" fill="#70707c" opacity="0.12" filter="url(#sh)"/>
<g transform="matrix(0.960 0.210 -0.400 0.860 2680 1403)"><text x="0" y="50" font-family="Liberation Sans" font-weight="bold" font-size="60" fill="#a8121e" stroke="#a8121e" stroke-width="6" stroke-linejoin="round" textLength="134" lengthAdjust="spacingAndGlyphs" transform="translate(-6 14)">TEXT</text><text x="0" y="50" font-family="Liberation Sans" font-weight="bold" font-size="60" fill="#a8121e" stroke="#b4141f" stroke-width="6" stroke-linejoin="round" textLength="134" lengthAdjust="spacingAndGlyphs" transform="translate(-3 7)">TEXT</text><text x="0" y="50" font-family="Liberation Sans" font-weight="bold" font-size="60" fill="#dc1e2c" stroke="#c81826" stroke-width="2" textLength="134" lengthAdjust="spacingAndGlyphs">TEXT</text></g>
</svg>
<div class="abs" style="left:1788px;top:218px;width:511.500px;height:313.500px;border-radius:5px;background:rgba(250,250,252,0.930);box-shadow:0 1px 5px rgba(90,100,130,0.250);overflow:hidden"><div style="height:82px;background:#fff;border-bottom:2px solid #e3e4e9"></div></div>
<div class="abs" style="left:1799px;top:233px;width:42px;height:52px;border:2px solid #dfe1e7;border-radius:9px;background:#fff"></div>
<svg class="abs" style="left:1811px;top:254px" width="18" height="12" viewBox="0 0 18 12"><path d="M1.300 2 H16.900 L9.100 11z" fill="#34455a"/></svg>
<div class="abs" style="left:1851px;top:241px;font-size:27px;font-weight:bold;line-height:34px;color:#3a4a5e;letter-spacing:1.450px;white-space:nowrap">Shapes(2)</div>
<svg class="abs" style="left:2170px;top:234px" width="110" height="50" viewBox="2170 234 110 50">
<rect x="2175.500" y="258.500" width="26.500" height="19.500" rx="2.500" fill="#5a6b80"/>
<path d="M2187.500 259 V253 A7 7 0 0 1 2201.500 253 V256" fill="none" stroke="#5a6b80" stroke-width="3.200"/>
<path d="M2250.700 266 V262 C2250.700 259.500 2244.300 256.500 2244.300 251.500 A11.700 11.300 0 0 1 2267.700 251.500 C2267.700 256.500 2261.300 259.500 2261.300 262 V266Z" fill="#c9ced9" stroke="#5a6b80" stroke-width="3.200" stroke-linejoin="round"/>
<path d="M2251 270.500 H2261 M2252.500 275 H2259.500" stroke="#5a6b80" stroke-width="2.200" fill="none"/>
</svg>
<svg class="abs" style="left:1870px;top:326px" width="350" height="116" viewBox="1870 326 350 116">
<defs><pattern id="hs" width="17" height="17" patternUnits="userSpaceOnUse" patternTransform="rotate(45)"><rect width="8.500" height="17" fill="#a9a9a9"/><rect x="8.500" width="8.500" height="17" fill="#cbcbcb"/></pattern></defs>
<circle cx="1928" cy="383.700" r="49.200" fill="#fcfcfd" stroke="#ececf0" stroke-width="1.600"/>
<circle cx="2160" cy="383.700" r="49.200" fill="#fcfcfd" stroke="#ececf0" stroke-width="1.600"/>
<circle cx="1928" cy="383.700" r="39.800" fill="#46b649"/>
<circle cx="2160" cy="383.700" r="39.800" fill="url(#hs)"/>
</svg>
<div id="bot"></div><div id="rstrip"></div>
<svg class="abs" style="left:0;top:1586px" width="14" height="12" viewBox="0 0 14 12"><path d="M0 0 V12 H12 A12 12 0 0 1 0 0z" fill="#6a6a6a"/></svg>
<svg class="abs" style="left:2866px;top:1586px" width="14" height="12" viewBox="0 0 14 12"><path d="M12 0 V12 H0 A12 12 0 0 0 12 0z" fill="#5a5a5a"/></svg>
<svg class="lbl" style="position:absolute;left:2533.57px;top:33.30px;width:88.86px;height:28.38px;" viewBox="16 -854 2962 946" preserveAspectRatio="none"><text x="0" y="0" fill="#5b8fd0">新機能</text></svg>
<svg class="lbl" style="position:absolute;left:2370.41px;top:131.40px;width:120.18px;height:23.10px;" viewBox="62 -866 4807 924" preserveAspectRatio="none"><text x="0" y="0" fill="#3a4654">インポート</text></svg>
<svg class="lbl" style="position:absolute;left:2529.56px;top:131.40px;width:144.88px;height:23.30px;" viewBox="74 -866 5795 932" preserveAspectRatio="none"><text x="0" y="0" fill="#3a4654">エクスポート</text></svg>
<svg class="lbl" style="position:absolute;left:2749.71px;top:131.40px;width:47.58px;height:23.50px;" viewBox="44 -850 1903 940" preserveAspectRatio="none"><text x="0" y="0" fill="#3a4654">共有</text></svg>
<svg class="lbl" style="position:absolute;left:2435.30px;top:306.60px;width:92.40px;height:22.09px;" viewBox="22 -850 3932 940" preserveAspectRatio="none"><text x="0" y="0" fill="#34465a">作業平面</text></svg>
<svg class="lbl" style="position:absolute;left:2676.36px;top:308.00px;width:90.87px;height:19.39px;" viewBox="40 -767 3867 825" preserveAspectRatio="none"><text x="0" y="0" fill="#34465a">ルーラー</text></svg>
<svg class="lbl" style="position:absolute;left:2360.80px;top:412.00px;width:160.87px;height:25.46px;" viewBox="23 -853 5958 943" preserveAspectRatio="none"><text x="0" y="0" fill="#2a3440">基本シェイプ</text></svg>
<svg class="lbl" style="position:absolute;left:2435.83px;top:727.10px;width:80.34px;height:21.39px;" viewBox="40 -837 3881 930" preserveAspectRatio="none"><text x="0" y="0" fill="#34465a">ボックス</text></svg>
<svg class="lbl" style="position:absolute;left:2706.81px;top:727.10px;width:43.59px;height:21.69px;" viewBox="80 -854 1895 943" preserveAspectRatio="none"><text x="0" y="0" fill="#34465a">円柱</text></svg>
<svg class="lbl" style="position:absolute;left:2435.83px;top:1002.10px;width:80.34px;height:21.39px;" viewBox="40 -837 3881 930" preserveAspectRatio="none"><text x="0" y="0" fill="#34465a">ボックス</text></svg>
<svg class="lbl" style="position:absolute;left:2706.81px;top:1002.10px;width:43.59px;height:21.69px;" viewBox="80 -854 1895 943" preserveAspectRatio="none"><text x="0" y="0" fill="#34465a">円柱</text></svg>
<svg class="lbl" style="position:absolute;left:2453.66px;top:1278.60px;width:44.69px;height:21.83px;" viewBox="25 -854 1943 949" preserveAspectRatio="none"><text x="0" y="0" fill="#34465a">角錐</text></svg>
<svg class="lbl" style="position:absolute;left:2706.20px;top:1278.60px;width:44.80px;height:21.64px;" viewBox="30 -850 1948 941" preserveAspectRatio="none"><text x="0" y="0" fill="#34465a">屋根</text></svg>
<svg class="lbl" style="position:absolute;left:2431.17px;top:1555.60px;width:89.65px;height:21.78px;" viewBox="80 -850 3898 947" preserveAspectRatio="none"><text x="0" y="0" fill="#34465a">円形屋根</text></svg>
<svg class="lbl" style="position:absolute;left:2706.60px;top:1555.60px;width:44.00px;height:21.690px;" viewBox="26 -850 1913 943" preserveAspectRatio="none"><text x="0" y="0" fill="#34465a">文字</text></svg>
<svg class="lbl" style="position:absolute;left:1894.36px;top:447.00px;width:67.29px;height:19.03px;" viewBox="111 -782 3776 865" preserveAspectRatio="none"><text x="0" y="0" fill="#3a4452" style="font-weight:500">ソリッド</text></svg>
<svg class="lbl" style="position:absolute;left:2149.85px;top:447.50px;width:20.31px;height:20.48px;" viewBox="43 -845 923 931" preserveAspectRatio="none"><text x="0" y="0" fill="#3a4452" style="font-weight:500">穴</text></svg>
<svg class="lbl" style="position:absolute;left:2143.76px;top:1479.00px;width:140.47px;height:21.53px;" viewBox="39 -864 6937 957" preserveAspectRatio="none"><text x="0" y="0" fill="#6b7785">グリッドを編集</text></svg>
<svg class="lbl" style="position:absolute;left:1935.45px;top:1541.40px;width:176.05px;height:21.53px;" viewBox="39 -864 8942 957" preserveAspectRatio="none"><text x="0" y="0" fill="#3a4654">グリッドにスナップ</text></svg>
<div class="abs" style="left:1866.500px;top:204px;width:240px;height:55.500px;border-radius:8px;background:#212121"></div>
<svg class="abs" style="left:1976px;top:190px" width="22" height="16" viewBox="1976 190 22 16"><path d="M1986 192.300 L1993.500 205.500 H1978.500z" fill="#212121"/></svg>
<svg class="lbl" style="position:absolute;left:1887.19px;top:222.20px;width:199.01px;height:24.20px;" viewBox="39 -864 8767 1066" preserveAspectRatio="none"><text x="0" y="0" fill="#fff" textLength="8850" lengthAdjust="spacing">グループ化(Ctrl+G)</text></svg>
<svg class="abs" style="left:1830px;top:90px;overflow:visible" width="320" height="230" viewBox="1830 90 320 230">
<defs><filter id="es" x="-10%" y="-10%" width="125%" height="125%"><feDropShadow dx="2" dy="3.500" stdDeviation="2.500" flood-color="#000" flood-opacity="0.450"/></filter></defs>
<ellipse cx="1986.600" cy="203" rx="134.600" ry="94.500" fill="none" stroke="#f0281c" stroke-width="6" filter="url(#es)"/></svg>
</body></html>
